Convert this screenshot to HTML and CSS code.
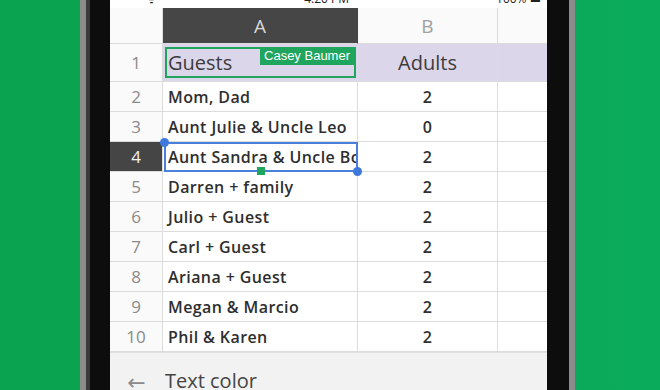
FILE: index.html
```html
<!DOCTYPE html>
<html lang="en">
<head>
  <meta charset="UTF-8" />
  <title>Sheets - Guest list</title>
  <link rel="stylesheet" href="styles.css">
</head>
<body>
  <div class="phone">
    <div class="screen">
      <div class="status">
        <div class="status-inner">
          <span>•••••• ᯤ</span>
          <span>4:20 PM</span>
          <span>100% ▬</span>
        </div>
      </div>

      <div class="sheet">
        <div class="cell corner"></div>
        <div class="cell colhead active">A</div>
        <div class="cell colhead">B</div>
        <div class="cell colhead"></div>

        <div class="cell rownum tall">1</div>
        <div class="cell title tall a1">
          Guests
          <div class="collab-box"></div>
          <div class="collab-tag">Casey Baumer</div>
        </div>
        <div class="cell title tall num">Adults</div>
        <div class="cell title tall"></div>

        <div class="cell rownum">2</div>
        <div class="cell">Mom, Dad</div>
        <div class="cell num">2</div>
        <div class="cell"></div>

        <div class="cell rownum">3</div>
        <div class="cell">Aunt Julie &amp; Uncle Leo</div>
        <div class="cell num">0</div>
        <div class="cell"></div>

        <div class="cell rownum active">4</div>
        <div class="cell selected">
          <span class="clip">Aunt Sandra &amp; Uncle Bob</span>
          <div class="sel-box"></div>
          <div class="handle top-left"></div>
          <div class="handle bottom-right"></div>
          <div class="fill-handle"></div>
        </div>
        <div class="cell num">2</div>
        <div class="cell"></div>

        <div class="cell rownum">5</div>
        <div class="cell">Darren + family</div>
        <div class="cell num">2</div>
        <div class="cell"></div>

        <div class="cell rownum">6</div>
        <div class="cell">Julio + Guest</div>
        <div class="cell num">2</div>
        <div class="cell"></div>

        <div class="cell rownum">7</div>
        <div class="cell">Carl + Guest</div>
        <div class="cell num">2</div>
        <div class="cell"></div>

        <div class="cell rownum">8</div>
        <div class="cell">Ariana + Guest</div>
        <div class="cell num">2</div>
        <div class="cell"></div>

        <div class="cell rownum">9</div>
        <div class="cell">Megan &amp; Marcio</div>
        <div class="cell num">2</div>
        <div class="cell"></div>

        <div class="cell rownum">10</div>
        <div class="cell">Phil &amp; Karen</div>
        <div class="cell num">2</div>
        <div class="cell"></div>
      </div>

      <div class="toolbar">
        <span class="back">&larr;</span>
        <span class="toolbar-title">Text color</span>
      </div>
    </div>
  </div>
</body>
</html>
```

FILE: styles.css
```css
body {
  margin: 0;
  height: 390px;
  overflow: hidden;
  background: linear-gradient(90deg, #0aa34f 0%, #0ba657 50%, #0bab5c 100%);
  font-family: "Open Sans", "DejaVu Sans", sans-serif;
}
.phone {
  margin-left: 80px;
  width: 437px;
  height: 390px;
  padding: 0 22px 0 24px;
  background: #0d0d0d;
  border-left: 6px solid #8c8c8c;
  border-right: 6px solid #8c8c8c;
  box-shadow: inset 4px 0 0 #3a3a3a;
}
.screen {
  height: 390px;
  background: #fff;
  display: flex;
  flex-direction: column;
  overflow: hidden;
}
.status {
  height: 8px;
  overflow: hidden;
  flex-shrink: 0;
}
.status-inner {
  height: 16px;
  margin-top: -9px;
  display: flex;
  justify-content: space-between;
  padding: 0 6px;
  font-size: 12px;
  line-height: 16px;
  color: #222;
}
.sheet {
  display: grid;
  grid-template-columns: 53px 195px 140px 49px;
  grid-template-rows: 36px 38px repeat(9, 30px);
  flex-shrink: 0;
}
.cell {
  position: relative;
  box-sizing: border-box;
  border-right: 1px solid #dcdcdc;
  border-bottom: 1px solid #dcdcdc;
  display: flex;
  align-items: center;
  padding-left: 5px;
  font-size: 16px;
  font-weight: 600;
  letter-spacing: 0.4px;
  color: #2e2e2e;
  white-space: nowrap;
}
.cell:nth-child(4n) {
  border-right: none;
}
.corner {
  background: #fafafa;
}
.colhead {
  justify-content: center;
  padding: 0;
  font-size: 19px;
  font-weight: 400;
  letter-spacing: 0;
  color: #a0a0a0;
  background: #fafafa;
}
.colhead.active {
  background: #464646;
  color: #d8d8d8;
  border-right-color: #464646;
}
.rownum {
  justify-content: center;
  padding: 0;
  font-size: 17px;
  font-weight: 400;
  letter-spacing: 0;
  color: #8a8a8a;
  background: #fafafa;
}
.rownum.active {
  background: #454545;
  color: #f0f0f0;
}
.num {
  justify-content: center;
  padding: 0;
}
.title {
  background: #dcd6ea;
  font-size: 20px;
  font-weight: 400;
  letter-spacing: 0;
  color: #3c3c3c;
}
.collab-box {
  position: absolute;
  left: 2px;
  right: 1px;
  top: 3px;
  bottom: 3px;
  border: 2px solid #20a55f;
}
.collab-tag {
  position: absolute;
  right: 3px;
  top: 3px;
  padding: 0 4px;
  height: 18px;
  line-height: 18px;
  background: #20a55f;
  color: #fff;
  font-family: "Liberation Sans", Arial, sans-serif;
  font-size: 13px;
  font-weight: 400;
  letter-spacing: 0;
}
.clip {
  display: block;
  width: 189px;
  overflow: hidden;
}
.sel-box {
  position: absolute;
  left: 1px;
  right: -1px;
  top: 0;
  bottom: -1px;
  border: 2px solid #4a7fdc;
}
.handle {
  position: absolute;
  width: 9px;
  height: 9px;
  border-radius: 50%;
  background: #3f78dc;
  z-index: 2;
}
.top-left {
  left: -3px;
  top: -4px;
}
.bottom-right {
  right: -5px;
  bottom: -5px;
}
.fill-handle {
  position: absolute;
  left: 94px;
  bottom: -4px;
  width: 8px;
  height: 8px;
  background: #20a55f;
  z-index: 2;
}
.toolbar {
  flex: 1;
  background: #f2f2f2;
  border-top: 1px solid #e0e0e0;
  display: flex;
  align-items: flex-start;
  padding-top: 15px;
}
.back {
  width: 53px;
  text-align: center;
  font-size: 22px;
  line-height: 26px;
  color: #8a8a8a;
}
.toolbar-title {
  padding-left: 2px;
  font-size: 20px;
  line-height: 26px;
  color: #444;
}
```
